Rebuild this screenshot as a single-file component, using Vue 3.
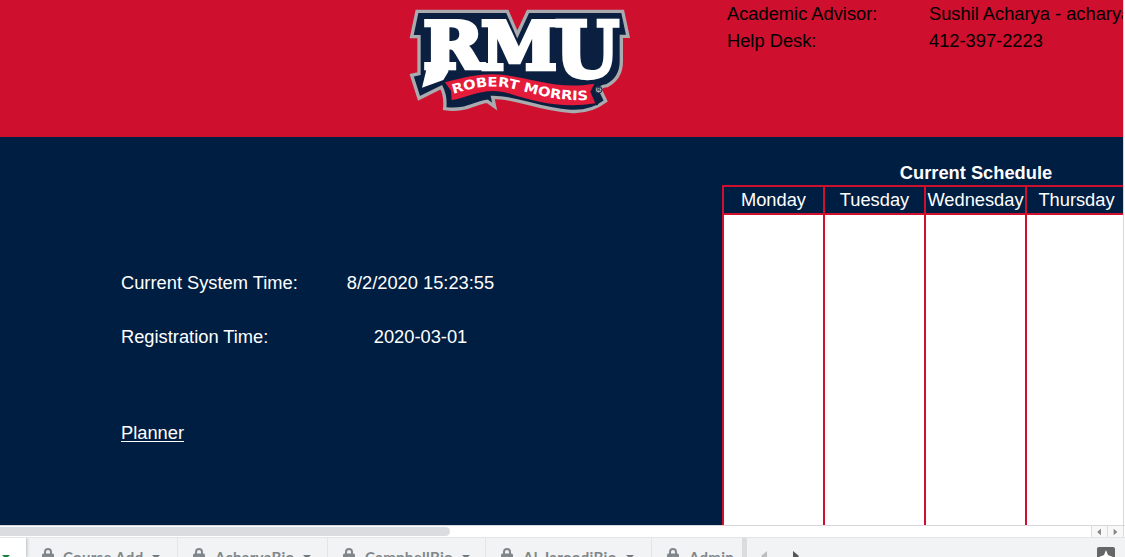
<script setup>
const contacts = [
  { label: 'Academic Advisor:', value: 'Sushil Acharya - acharya@rmu.edu' },
  { label: 'Help Desk:', value: '412-397-2223' },
]
const days = ['Monday', 'Tuesday', 'Wednesday', 'Thursday']
const tabs = [
  { name: 'Course Add', key: 'course' },
  { name: 'AcharyaBio', key: 'acharya' },
  { name: 'CampbellBio', key: 'campbell' },
  { name: 'Al-JaroodiBio', key: 'jaroodi' },
  { name: 'Admin', key: 'admin' },
]
</script>

<template>
  <div class="app">
    <header class="banner">
      <svg class="logo" viewBox="0 0 720 375" role="img" aria-label="RMU Robert Morris">
        <path class="badge" d="M51 34H322L352 103L384 34H668L684 109H664V184Q664 235 621 257Q594 260 604 276L617 303Q570 339 510 334C410 327 352 292 278 292L284 320L262 304C226 307 201 335 134 326Q138 290 124 262L57 295L35 226L57 221V110H35Z" />
        <g class="letters">
          <text x="70" y="204" font-size="193" textLength="180" lengthAdjust="spacingAndGlyphs">R</text>
          <text x="243" y="208" font-size="199" textLength="228" lengthAdjust="spacingAndGlyphs">M</text>
          <text x="465" y="232" font-size="232" textLength="192" lengthAdjust="spacingAndGlyphs">U</text>
        </g>
        <path class="foot" d="M66 263L84 188H145V215L130 240Z" />
        <path class="ribbon-edge" d="M135 247C210 226 258 218 314 225C408 238 474 269 583 251L571 275L586 310C484 326 404 304 330 281C257 257 209 292 155 300L153 272Z" />
        <path class="ribbon" d="M135 247C210 226 258 218 314 225C408 238 474 269 583 251L571 275L586 310C484 326 404 304 330 281C257 257 209 292 155 300L153 272Z" />
        <path id="ribbon-line" d="M160 281C220 264 266 252 328 264C405 280 469 307 580 299" fill="none" />
        <text class="motto" textLength="411" lengthAdjust="spacingAndGlyphs"><textPath href="#ribbon-line">ROBERT MORRIS</textPath></text>
        <circle class="mark" cx="596" cy="269" r="10" />
        <text class="mark-letter" x="591" y="274">R</text>
      </svg>
      <dl class="contacts">
        <template v-for="c in contacts" :key="c.label">
          <dt>{{ c.label }}</dt>
          <dd>{{ c.value }}</dd>
        </template>
      </dl>
    </header>

    <main class="sheet">
      <section class="info">
        <div class="row"><span>Current System Time:</span><span class="val">8/2/2020 15:23:55</span></div>
        <div class="row"><span>Registration Time:</span><span class="val">2020-03-01</span></div>
        <a class="planner">Planner</a>
      </section>
      <section class="schedule">
        <h2>Current Schedule</h2>
        <div class="days">
          <div v-for="d in days" :key="d" class="day">
            <div class="day-name">{{ d }}</div>
          </div>
        </div>
      </section>
    </main>

    <div class="scroll">
      <div class="thumb"></div>
      <div class="arrows">
        <span><svg viewBox="0 0 16 11"><path d="M9.500 2.500V9.500L5.500 6Z" /></svg></span>
        <span><svg viewBox="0 0 16 11"><path d="M6 2.500V9.500L10 6Z" /></svg></span>
      </div>
    </div>

    <footer class="tabbar">
      <div class="active"><i class="caret"></i></div>
      <div v-for="t in tabs" :key="t.key" class="tab" :class="t.key">
        <svg class="lock" viewBox="0 0 12 15"><path d="M3 6V4a3 3 0 0 1 6 0V6" /><rect y="5.500" width="12" height="9.500" rx="1.500" /><circle cx="6" cy="10" r="1.300" /></svg>
        <span class="tab-name">{{ t.name }}</span>
        <i class="caret"></i>
      </div>
      <div class="fade"></div>
      <svg class="nav" viewBox="0 0 50 20"><path class="dim" d="M20 13V23L14 18Z" /><path d="M46 13V24L52 18Z" /></svg>
      <svg class="explore" viewBox="0 0 18 18"><path d="M2 0H16Q18 0 18 2V18H0V2Q0 0 2 0Z" /><path class="spark" d="M9 3L11 8L16 10L11 12L9 17L7 12L2 10L7 8Z" /></svg>
    </footer>
  </div>
</template>

<style>
body { margin: 0; overflow: hidden; }
</style>

<style scoped>
.app {
  width: 1125px; height: 557px; overflow: hidden;
  display: flex; flex-direction: column;
  font: 18.3px/27px "Liberation Sans", Arial, sans-serif;
  color: #fff; background: #fff;
}
.banner {
  width: 1124px; height: 137px; flex: none; overflow: hidden; box-sizing: border-box;
  display: flex; background: #ce0f2d; border-right: 1px solid #d8d8dc;
}
.logo { width: 240px; height: 125px; margin-left: 400px; flex: none; }
.badge { fill: #0b2040; stroke: #a9abae; stroke-width: 10; }
.letters {
  font-family: "DejaVu Serif", serif; font-weight: 700;
  fill: #fff; stroke: #fff; stroke-width: 13;
}
.foot { fill: #fff; }
.ribbon-edge { fill: #0b2040; stroke: #0b2040; stroke-width: 12; }
.ribbon { fill: #e51b3b; }
.motto { font: 700 39px "DejaVu Sans", sans-serif; fill: #fff; }
.mark { fill: #a9abae; stroke: #0b2040; stroke-width: 3; }
.mark-letter { font: 700 14px "Liberation Sans", sans-serif; fill: #0b2040; }
.contacts {
  margin: 0 0 0 87px; flex: none; color: #000;
  display: grid; grid-template-columns: 202px 300px; align-content: start;
}
.contacts dt, .contacts dd { margin: 0; white-space: nowrap; height: 27px; }
.sheet {
  width: 1124px; height: 388px; flex: none; overflow: hidden; box-sizing: border-box;
  display: flex; background: #001e42; border-right: 1px solid #d8d8dc;
}
.info { width: 722px; flex: none; padding: 132px 0 0 121px; box-sizing: border-box; }
.row { display: grid; grid-template-columns: 198px 203px; margin-bottom: 27px; }
.row span { white-space: nowrap; }
.val { text-align: center; }
.planner { display: block; margin-top: 69px; text-decoration: underline; text-decoration-thickness: 1px; text-underline-offset: 2px; }
.schedule { width: 508px; flex: none; display: flex; flex-direction: column; padding-top: 22px; }
.schedule h2 { margin: 0; height: 26px; font-size: 18.3px; font-weight: 700; text-align: center; line-height: 27px; }
.days { flex: 1; display: flex; border-left: 2px solid #ce0f2d; border-top: 2px solid #ce0f2d; }
.day { width: 101px; box-sizing: border-box; border-right: 2px solid #ce0f2d; background: #fff; flex: none; }
.day-name { height: 26px; line-height: 26px; background: #001e42; border-bottom: 2px solid #ce0f2d; text-align: center; white-space: nowrap; }
.scroll { height: 12px; flex: none; border-top: 1px solid #d8d8dc; box-sizing: border-box; display: flex; justify-content: space-between; }
.thumb { width: 450px; height: 9px; margin-top: 1px; background: #dadce0; border-radius: 0 5px 5px 0; }
.arrows { display: flex; width: 34px; }
.arrows span { width: 16px; flex: none; box-sizing: border-box; border-left: 1px solid #dadce0; background: #f8f8f8; }
.arrows span:last-child { width: 17px; border-right: 1px solid #dadce0; }
.arrows svg { display: block; width: 15px; height: 11px; fill: #858585; }
.tabbar { height: 20px; flex: none; overflow: hidden; display: flex; background: #f1f3f4; border-top: 1px solid #e3e5e8; box-sizing: border-box; }
.active { width: 26px; flex: none; background: #fff; box-shadow: 1px 0 3px #b8babd; display: flex; padding-left: 2px; box-sizing: border-box; }
.caret { width: 0; height: 0; border: 4px solid transparent; border-top-color: #73787c; border-bottom: 0; margin-top: 17px; flex: none; }
.active .caret { border-top-color: #188038; }
.tab { box-sizing: border-box; flex: none; display: flex; padding-left: 15px; border-right: 1px solid #e3e5e8; overflow: hidden; }
.lock { width: 12px; height: 15px; margin: 10px 10px 0 0; flex: none; fill: #80868b; }
.lock path { fill: none; stroke: #80868b; stroke-width: 2; }
.lock circle { fill: #f1f3f4; }
.tab-name { font: 700 15px/20px Lato, sans-serif; color: #80868b; margin-top: 9px; white-space: nowrap; letter-spacing: .3px; flex: none; }
.tab .caret { margin-left: 9px; }
.course { width: 152px; padding-left: 16px; }
.course .lock { margin-right: 9px; }
.acharya { width: 150px; }
.campbell { width: 158px; }
.jaroodi { width: 166px; }
.admin { width: 90px; border: 0; }
.fade { width: 5px; background: #dadddc; flex: none; }
.nav { width: 50px; height: 20px; fill: #555; flex: none; overflow: visible; }
.nav .dim { fill: #bdbdbd; }
.explore { width: 18px; height: 18px; margin: 9px 10px 0 auto; fill: #666; flex: none; }
.explore .spark { fill: #fff; }
</style>
